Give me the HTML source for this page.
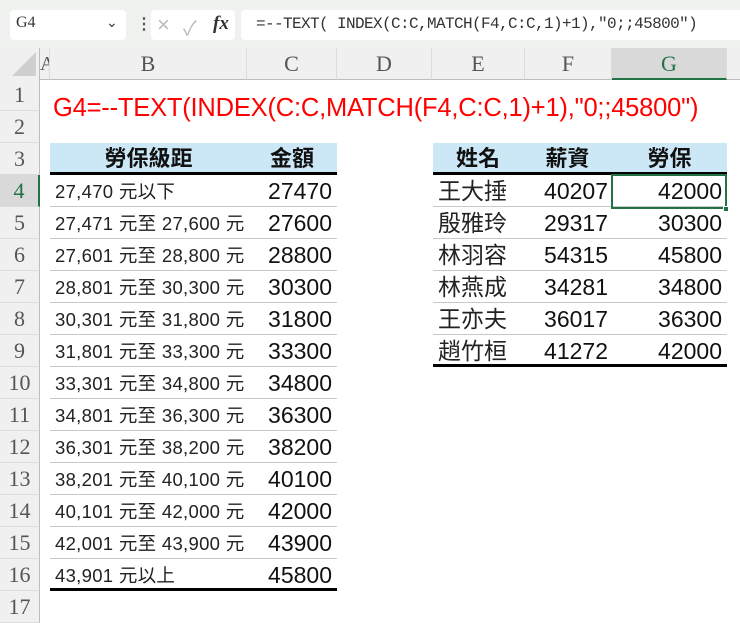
<!DOCTYPE html>
<html><head><meta charset="utf-8"><style>
*{margin:0;padding:0;box-sizing:border-box}
body{width:740px;height:621px;overflow:hidden;background:#fff;position:relative;font-family:"Liberation Sans","Noto Sans CJK TC",sans-serif}
.a{position:absolute}
.top{left:0;top:0;width:740px;height:48px;background:#f0f2f0}
.box{background:#fff;border-radius:4px;height:30px;top:10px}
.ser{font-family:"Liberation Serif","Noto Serif CJK SC",serif;color:#555}
.colh{top:48px;height:32px;background:#f0f0f0;border-bottom:1px solid #bdbdbd;border-right:1px solid #dcdcdc;font-size:22px;text-align:center;line-height:32px}
.rowh{left:0;width:40px;height:32px;background:#f0f0f0;border-bottom:1px solid #dcdcdc;border-right:1px solid #bdbdbd;font-size:22px;text-align:center;line-height:32px}
.cell{height:32px;line-height:33px;border-bottom:1px solid #c8c8c8;white-space:nowrap}
.hd{background:#cce8f6;font-size:22px;font-weight:bold;text-align:center;border-bottom:3px solid #000;color:#111;line-height:31px}
</style></head><body>
<div class="a top"></div>
<div class="a box" style="left:10px;width:116px"><span class="a ser" style="left:6px;top:4px;font-size:16px;color:#333">G4</span><span class="a" style="left:96px;top:4px;font-size:14px;color:#333">&#8964;</span></div>
<div class="a" style="left:136px;top:14px;font-size:16px;color:#555;font-weight:bold">&#8942;</div>
<div class="a box" style="left:151px;width:84px"><span class="a" style="left:6px;top:2px;font-size:22px;color:#bbb">&#215;</span><span class="a" style="left:32px;top:2px;font-size:20px;color:#bbb">&#10003;</span><span class="a ser" style="left:62px;top:3px;font-size:19px;color:#333;font-style:italic;font-weight:bold">fx</span></div>
<div class="a box" style="left:241px;width:499px;border-radius:4px 0 0 4px"><span class="a" style="left:15px;top:5px;font-family:'Liberation Mono',monospace;font-size:16px;color:#333;letter-spacing:-0.6px">=--TEXT( INDEX(C:C,MATCH(F4,C:C,1)+1),"0;;45800")</span></div>
<div class="a" style="left:0;top:48px;width:40px;height:32px;background:#f0f0f0;border-bottom:1px solid #bdbdbd;border-right:1px solid #bdbdbd"></div>
<div class="a" style="left:12px;top:52px;width:0;height:0;border-left:24px solid transparent;border-bottom:24px solid #cfcfcf"></div>
<div class="a colh ser" style="left:40px;width:10px;font-size:20px;overflow:hidden">A</div>
<div class="a colh ser" style="left:50px;width:197px">B</div>
<div class="a colh ser" style="left:247px;width:90px">C</div>
<div class="a colh ser" style="left:337px;width:95px">D</div>
<div class="a colh ser" style="left:432px;width:93px">E</div>
<div class="a colh ser" style="left:525px;width:87px">F</div>
<div class="a colh ser" style="left:612px;width:115px;background:#d9d9d9;color:#217346;border-bottom:2px solid #217346">G</div>
<div class="a colh ser" style="left:727px;width:20px"></div>
<div id="rh"></div>
<div class="a" style="left:53px;top:94px;font-size:25.5px;color:#f00;letter-spacing:-0.2px;font-weight:500">G4=--TEXT(INDEX(C:C,MATCH(F4,C:C,1)+1),"0;;45800")</div>
<div class="a cell hd" style="left:50px;top:143px;width:197px">勞保級距</div>
<div class="a cell hd" style="left:247px;top:143px;width:90px">金額</div>
<div class="a cell hd" style="left:433px;top:143px;width:90px">姓名</div>
<div class="a cell hd" style="left:523px;top:143px;width:89px">薪資</div>
<div class="a cell hd" style="left:612px;top:143px;width:115px">勞保</div>
<div id="t"></div>
<script>
var h='';for(var i=1;i<=17;i++){h+='<div class="a rowh ser" style="top:'+(79+(i-1)*32)+'px'+(i==4?';background:#d9d9d9;color:#217346;border-right:2px solid #217346':'')+'">'+i+'</div>';}
document.getElementById('rh').outerHTML=h;
var L=[["27,470 元以下",27470],["27,471 元至 27,600 元",27600],["27,601 元至 28,800 元",28800],["28,801 元至 30,300 元",30300],["30,301 元至 31,800 元",31800],["31,801 元至 33,300 元",33300],["33,301 元至 34,800 元",34800],["34,801 元至 36,300 元",36300],["36,301 元至 38,200 元",38200],["38,201 元至 40,100 元",40100],["40,101 元至 42,000 元",42000],["42,001 元至 43,900 元",43900],["43,901 元以上",45800]];
var R=[["王大捶",40207,42000],["殷雅玲",29317,30300],["林羽容",54315,45800],["林燕成",34281,34800],["王亦夫",36017,36300],["趙竹桓",41272,42000]];
var s='';
L.forEach(function(r,k){var y=175+k*32,last=k==L.length-1,b=last?'border-bottom:3px solid #000;':'';
s+='<div class="a cell" style="left:50px;top:'+y+'px;width:197px;padding-left:5px;font-size:18.5px;letter-spacing:0.3px;color:#222;'+b+'">'+r[0]+'</div>';
s+='<div class="a cell" style="left:247px;top:'+y+'px;width:90px;padding-right:5px;text-align:right;font-size:23px;color:#111;'+b+'">'+r[1]+'</div>';});
R.forEach(function(r,k){var y=175+k*32,last=k==R.length-1,b=last?'border-bottom:3px solid #000;':'';
s+='<div class="a cell" style="left:433px;top:'+y+'px;width:90px;padding-left:5px;font-size:23px;color:#222;'+b+'">'+r[0]+'</div>';
s+='<div class="a cell" style="left:523px;top:'+y+'px;width:89px;padding-right:4px;text-align:right;font-size:23px;color:#111;'+b+'">'+r[1]+'</div>';
s+='<div class="a cell" style="left:612px;top:'+y+'px;width:115px;padding-right:5px;text-align:right;font-size:23px;color:#111;'+b+'">'+r[2]+'</div>';});
s+='<div class="a" style="left:611px;top:174px;width:116px;height:35px;border:2px solid #217346"></div><div class="a" style="left:723px;top:206px;width:6px;height:6px;background:#217346;border:1px solid #fff"></div>';
document.getElementById('t').outerHTML=s;
</script>
</body></html>
